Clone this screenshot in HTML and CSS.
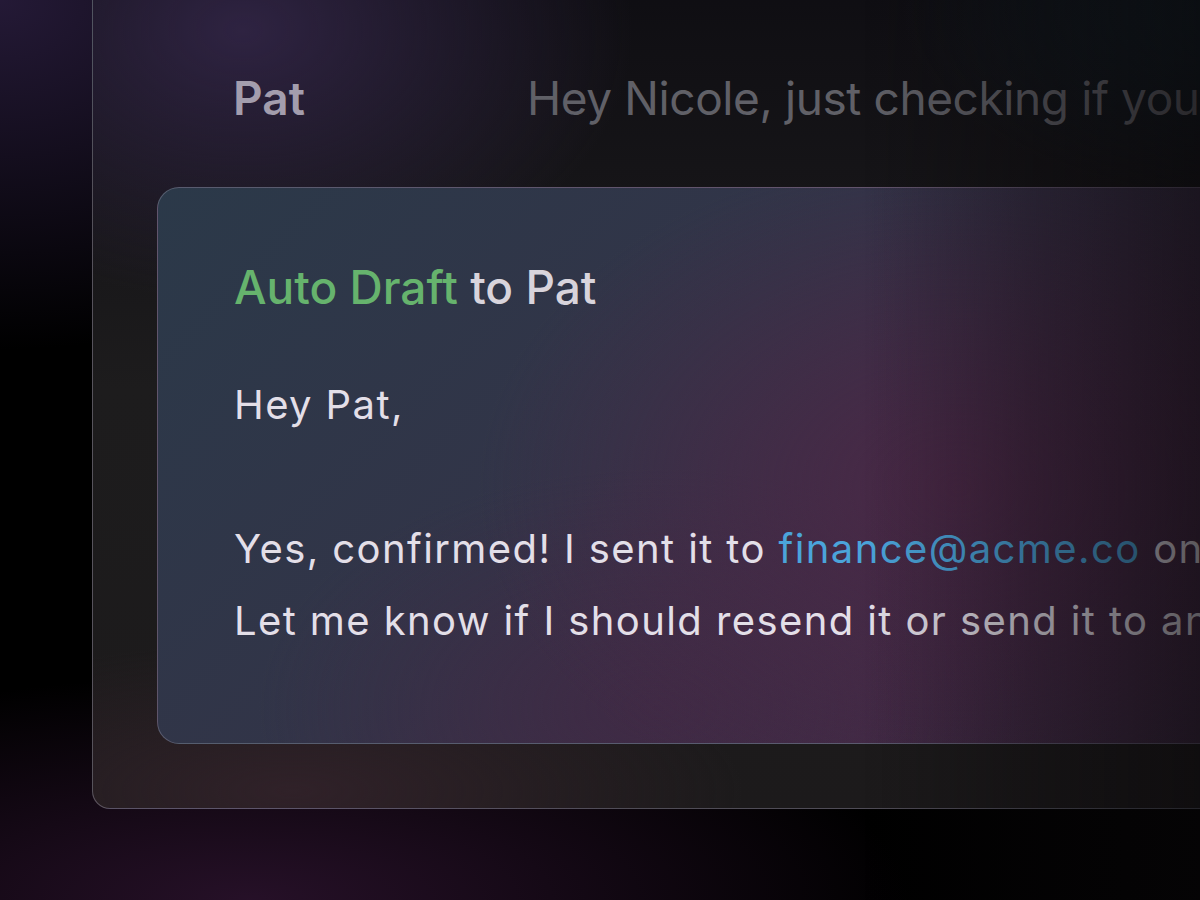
FILE: index.html
```html
<!DOCTYPE html>
<html lang="en">
<head>
<meta charset="utf-8">
<title>Auto Draft</title>
<link rel="stylesheet" href="styles.css">
</head>
<body>
<div class="stage">
  <div class="panel">
    <div class="row">
      <div class="sender">Pat</div>
      <div class="preview">Hey Nicole, just checking if you received the invoice</div>
    </div>
    <div class="card">
      <div class="title"><span class="auto">Auto Draft</span> to Pat</div>
      <div class="body">
        <p class="line">Hey Pat,</p>
        <p class="line blank">&nbsp;</p>
        <p class="line">Yes, confirmed! I sent it to <span class="link">finance@acme.co</span> on Monday.</p>
        <p class="line">Let me know if I should resend it or send it to another address.</p>
      </div>
    </div>
  </div>
</div>
<div class="fade"></div>
</body>
</html>
```

FILE: styles.css
```css
html, body {
  margin: 0;
  padding: 0;
}
body {
  width: 1200px;
  height: 900px;
  overflow: hidden;
  font-family: "Inter", "Noto Sans", sans-serif;
  background:
    radial-gradient(ellipse 700px 500px at 0px 0px, rgba(40, 28, 60, 0.9), rgba(40, 28, 60, 0) 70%),
    radial-gradient(ellipse 900px 300px at 250px 900px, rgba(42, 18, 44, 0.9), rgba(42, 18, 44, 0) 75%),
    #000;
}
.stage {
  padding-left: 92px;
}
.panel {
  margin-top: -30px;
  width: 1300px;
  box-sizing: border-box;
  border: 1px solid rgba(160, 152, 170, 0.45);
  border-radius: 18px;
  padding: 99px 0 64px 64px;
  background:
    radial-gradient(ellipse 520px 360px at 150px 60px, rgba(48, 36, 68, 0.95), rgba(48, 36, 68, 0) 75%),
    radial-gradient(ellipse 520px 260px at 1200px 40px, rgba(18, 34, 42, 0.95), rgba(18, 34, 42, 0) 75%),
    radial-gradient(ellipse 600px 200px at 200px 820px, rgba(50, 34, 42, 0.9), rgba(50, 34, 42, 0) 75%),
    linear-gradient(180deg, #0e0d12 0%, #1d1c1d 50%, #1c1a1b 100%);
}
.row {
  display: flex;
  align-items: baseline;
  padding-left: 76px;
  height: 56px;
  line-height: 56px;
  font-size: 46px;
  margin-bottom: 61px;
  white-space: nowrap;
}
.sender {
  width: 294px;
  flex: none;
  font-weight: 600;
  color: #a39dad;
}
.preview {
  color: #606067;
  letter-spacing: -0.4px;
}
.card {
  border: 1px solid rgba(150, 150, 170, 0.4);
  border-radius: 22px;
  padding: 71px 0 86px 76px;
  background:
    radial-gradient(ellipse 600px 420px at 800px 300px, rgba(74, 40, 70, 0.95), rgba(74, 40, 70, 0) 80%),
    radial-gradient(ellipse 500px 300px at 500px 520px, rgba(66, 40, 68, 0.7), rgba(66, 40, 68, 0) 80%),
    linear-gradient(135deg, #2b3949 0%, #323448 40%, #3e2b45 70%, #3a2a40 100%);
  white-space: nowrap;
}
.title {
  font-size: 46px;
  line-height: 56px;
  font-weight: 500;
  color: #d8d4dc;
  margin-bottom: 54px;
}
.auto {
  color: #66b36d;
}
.body {
  font-size: 40px;
  line-height: 72px;
  letter-spacing: 1.4px;
  color: #e3dfe8;
}
.line {
  margin: 0;
}
.link {
  color: #4ba4da;
}
.fade {
  position: fixed;
  inset: 0;
  pointer-events: none;
  background: linear-gradient(90deg, rgba(0,0,0,0) 0%, rgba(0,0,0,0) 72%, rgba(8,6,8,0.35) 86%, rgba(8,6,8,0.62) 100%);
}
```
